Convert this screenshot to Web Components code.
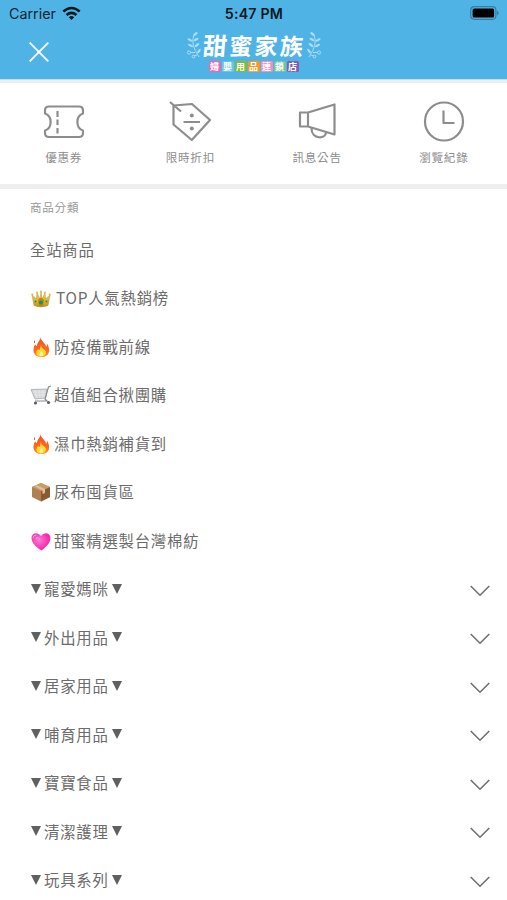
<!DOCTYPE html>
<html lang="zh-Hant">
<head>
<meta charset="utf-8">
<title>商品分類</title>
<style>
html,body{margin:0;background:#fff}
body{height:900px;overflow:hidden;font-family:"Noto Sans CJK TC","Noto Sans",sans-serif;color:#6c6c6c}
</style>
</head>
<body>
<store-menu></store-menu>
<script>
const define = (name, markup, render) => {
  const t = document.createElement('template');
  t.innerHTML = markup;
  customElements.define(name, class extends HTMLElement {
    constructor() {
      super();
      this.attachShadow({mode: 'open'}).append(t.content.cloneNode(true));
    }
    connectedCallback() { if (render) render(this, this.shadowRoot); }
  });
};

const shortcutIcons = {
  ticket: '<path d="M6 5.500H37Q41 5.500 41 9.500V12.500C33.500 15 33.500 27 41 29.500V32Q41 36 37 36H7Q3 36 3 32V29.500C10.500 27 10.500 15 3 12.500V9.500Q3 5.500 7 5.500Z"/><path d="M15.500 10V16M15.500 18.500V24M15.500 27V32.500"/>',
  tag: '<path d="M4.500 4.500 23 3 41 19 22.800 39 4.500 23.500ZM1 1 12 10.500M14.500 21H31"/><circle cx="22.800" cy="14.500" r="2" fill="#8d8d8d" stroke="none"/><circle cx="22.800" cy="27.500" r="2" fill="#8d8d8d" stroke="none"/>',
  horn: '<path d="M4 11.500H12V25.500H4ZM12 11.500 38.500 3.500V33.500L12 25.500M15.500 27.500C15.500 38.500 30 38.500 30 31.500"/>',
  clock: '<circle cx="21" cy="20.500" r="19"/><path d="M20.500 9.500V22H31.500"/>'
};
const emojis = {
  crown: '<defs><linearGradient id="g" x2="0" y2="1"><stop stop-color="#f9de60"/><stop offset="1" stop-color="#c79318"/></linearGradient></defs><path d="M3 17.500 1 7 5.500 11 6 5 9 11 10 4 11 11 14 5 14.500 11 19 7 17 17.500Q10 20.500 3 17.500Z" fill="url(#g)" stroke="#b68b22" stroke-width=".5"/><g fill="#dfb93b"><circle cx="1.300" cy="6.500" r="1"/><circle cx="6" cy="4.500" r=".9"/><circle cx="10" cy="3.500" r="1"/><circle cx="14" cy="4.500" r=".9"/><circle cx="18.700" cy="6.500" r="1"/></g><path d="M7 12Q10 8 13 12L12 18H8Z" fill="#b98a13"/><g fill="#159467"><circle cx="10" cy="14.500" r="2"/><circle cx="4.500" cy="13.500" r="1"/><circle cx="15.500" cy="13.500" r="1"/></g>',
  fire: '<defs><linearGradient id="g" x2="0" y2="1"><stop stop-color="#f0502b"/><stop offset=".65" stop-color="#ff681c"/><stop offset="1" stop-color="#ff991d"/></linearGradient></defs><path d="M9.500 0C9.500 4 15 6 15 10Q16 9 16 6.500C20 13 18.500 20 10.500 20C2 20 1 13 4 7.500Q5 9 6 9C6 5 9.500 4 9.500 0Z" fill="url(#g)"/><path d="M10 8C10 12 15.500 12 15 16Q13.500 19.500 10 19.500C4 19.500 5 14 7 12Q8 13 8.500 13Z" fill="#ffda35"/><path d="M10.500 14Q14 19 10 19.300Q7 18 10.500 14Z" fill="#fff0a1"/><path d="M3.500 3.500V6" stroke="#f35b30"/>',
  cart: '<path d="M0 4.500 16 4 14.500 13 4 14Z" fill="#d6d7d9" stroke="#aaa" stroke-width=".8"/><path d="M2 7H15M3 10H15M4 5 6 13M8 5 9 13M12 5V13" stroke="#f0f0f0" stroke-width=".5"/><path d="M20 1 17.500 2 14 14 16 16H4" fill="none" stroke="#888b90" stroke-width="1.200"/><circle cx="4.500" cy="18" r="1.600" fill="#5b5f65"/><circle cx="17.500" cy="17.500" r="1.600" fill="#5b5f65"/>',
  box: '<path d="M1 5 10 1 19 5V15L10 19.500 1 15Z" fill="#b18050"/><path d="M10 9 19 5V15L10 19.500Z" fill="#885b36"/><path d="M1 5 10 1 19 5 10 9Z" fill="#c99b6c"/><path d="M5 3 14 7V11L11.500 12V8.500L3.500 4Z" fill="#dfc29b"/>',
  heart: '<defs><radialGradient id="g" cx=".4" cy=".4"><stop stop-color="#fa7bd4"/><stop offset="1" stop-color="#f72dac"/></radialGradient></defs><path d="M10.500 19.500C5 16 .5 12 .5 7C.5 1.500 7 .5 10 5C13 .5 19.500 1.500 19.500 7C19.500 12 15 16 10.500 19.500Z" fill="url(#g)"/><path d="M2 7Q2 4 5.500 4M5 8Q6 5 9 8.500" fill="none" stroke="#ffb8e9" stroke-width=".8"/>'
};

define('status-bar', `<style>
:host{display:grid;grid-template-columns:1fr auto 1fr;align-items:center;height:27px;padding:0 8px 0 9px;box-sizing:border-box;color:#102530;font:14.300px/27px Inter,sans-serif}
.l{display:flex;gap:6px;align-items:center}.time{font-weight:600;font-size:14.200px;color:#071720;letter-spacing:.2px}.r{justify-self:end;display:flex}
svg{display:block}</style>
<div class="l"><span>Carrier</span><svg width="19" height="15" viewBox="0 0 19 15" fill="none" stroke="#071720" stroke-width="2.600"><path d="M1.300 5.500Q9.500-1.500 17.700 5.500M4.500 9Q9.500 4.800 14.500 9"/><path d="M6.800 11.200Q9.500 9 12.200 11.200L9.500 14Z" fill="#071720" stroke="none"/></svg></div>
<span class="time">5:47 PM</span>
<div class="r"><svg width="29" height="15" viewBox="0 0 29 15"><rect x=".7" y=".7" width="25.200" height="12.600" rx="3.500" fill="none" stroke="#367f9f" stroke-width="1.200"/><rect x="2.600" y="2.600" width="21.500" height="8.800" rx="1.500"/><path d="M27 4.500Q30.500 7 27 9.500Z" fill="#367f9f"/></svg></div>`);

define('leaf-sprig', `<style>:host{display:block;width:16px;height:30px}:host([flip]){transform:scaleX(-1)}svg{display:block}</style>
<svg width="16" height="30" viewBox="0 0 16 30" fill="none" stroke="#a9dcf5" stroke-width="1"><path d="M8 4Q4 13 13 26"/><g fill="#a9dcf5" stroke="none"><ellipse cx="9.500" cy="3" rx="2.600" ry="1.200" transform="rotate(-35 9.500 3)"/><ellipse cx="4" cy="9" rx="2.800" ry="1.200" transform="rotate(25 4 9)"/><ellipse cx="10" cy="8.500" rx="2.800" ry="1.200" transform="rotate(-30 10 8.500)"/><ellipse cx="4.500" cy="14.500" rx="2.800" ry="1.200" transform="rotate(25 4.500 14.500)"/><ellipse cx="11" cy="14" rx="2.800" ry="1.200" transform="rotate(-40 11 14)"/><ellipse cx="13" cy="20" rx="2.600" ry="1.200" transform="rotate(-55 13 20)"/></g><circle cx="3" cy="21.500" r="1.600"/><circle cx="7.500" cy="25.500" r="1.400"/><path d="M4.500 21.500H9M8 25 11 24"/></svg>`);

define('brand-logo', `<style>
:host{display:grid;grid-template-columns:16px 100px 16px;column-gap:2px;justify-content:center;color:#fff}
.name{height:30px;line-height:28px;font-weight:700;white-space:nowrap;display:flex;justify-content:space-between;transform:translateX(-1px) skewX(-5deg)}
.name span{font-size:23px}.name span:first-child{font-size:24px}
.tiles{grid-column:1/4;display:flex;gap:1px;justify-content:center}
.tiles span{width:12px;height:11px;border-radius:1.500px;font-size:9px;line-height:11px;text-align:center;font-weight:700}
</style><leaf-sprig></leaf-sprig><div class="name"><span>甜</span><span>蜜</span><span>家</span><span>族</span></div><leaf-sprig flip></leaf-sprig><div class="tiles"></div>`,
(el, r) => {
  const colors = ['#eb69aa', '#62c6ed', '#80bd32', '#f29a25', '#ee91bf', '#73c69b', '#8060b0'];
  r.querySelector('.tiles').innerHTML = [...'婦嬰用品連鎖店'].map((c, i) => `<span style="background:${colors[i]}">${c}</span>`).join('');
});

define('app-header', `<style>
:host{display:block;height:79px;background:#50b3e6;border-bottom:1px solid #b9e0f4;box-sizing:content-box}
.bar{display:grid;grid-template-columns:1fr 136px 1fr;padding-top:4px}
.close{margin:11px 0 0 29px}</style>
<status-bar></status-bar><div class="bar"><svg class="close" width="20" height="20" viewBox="0 0 20 20" stroke="#fff" stroke-width="1.800"><path d="M.7.7 19.300 19.300M19.300.7.7 19.300"/></svg><brand-logo></brand-logo></div>`);

define('quick-link', `<style>:host{display:flex;flex-direction:column;align-items:center;color:#8d8d8d;font-size:11.600px;letter-spacing:.7px;line-height:18px}
svg{display:block;overflow:visible;margin-bottom:6px}span{padding-left:.500px}</style>
<svg width="42" height="41" viewBox="0 0 42 41" fill="none" stroke="#8d8d8d" stroke-width="2.200" stroke-linejoin="round"></svg><span><slot></slot></span>`,
(el, r) => { r.querySelector('svg').innerHTML = shortcutIcons[el.getAttribute('icon')]; });

define('category-row', `<style>
:host{display:flex;align-items:center;height:48.500px;padding:0 17px 0 30px;box-sizing:border-box;font-size:15.400px;letter-spacing:.75px;line-height:24px;white-space:nowrap}
.text{padding-bottom:1px}:host([spaced]) .text{padding-left:2px}
.emoji{width:20px;height:20px;margin:1px 3px 0 1px;overflow:visible}
.tri{width:10px;height:10px;flex:none}.before{margin:0 3px 0 1px}.after{margin:0 0 0 3.500px}
.chev{margin:4px 0 0 auto}[hidden]{display:none}
</style><svg class="emoji" viewBox="0 0 20 20" hidden></svg><svg class="tri before" viewBox="0 0 10 10" hidden><path d="M0 0H10L5 10Z" fill="#606060"/></svg><span class="text"><slot></slot></span><svg class="tri after" viewBox="0 0 10 10" hidden><path d="M0 0H10L5 10Z" fill="#606060"/></svg><svg class="chev" width="20" height="12" viewBox="0 0 20 12" fill="none" stroke="#707070" stroke-width="1.600" hidden><path d="M.7 1 10 10.200 19.300 1"/></svg>`,
(el, r) => {
  const e = el.getAttribute('emoji');
  if (e) {
    const svg = r.querySelector('.emoji');
    svg.removeAttribute('hidden');
    svg.innerHTML = emojis[e];
  }
  if (el.hasAttribute('group')) r.querySelectorAll('.tri,.chev').forEach(s => s.removeAttribute('hidden'));
});

define('store-menu', `<style>
:host{display:block;height:900px;overflow:hidden;background:#fff}
nav{display:grid;grid-template-columns:repeat(4,1fr);height:101px;padding-top:18px;box-sizing:border-box}
.rule{height:3px;background:#eee}.rule.b{height:5px}
h2{font-size:11.600px;font-weight:400;letter-spacing:.7px;line-height:18px;color:#999;margin:9px 0 9px 30px}
</style>
<app-header></app-header><div class="rule"></div>
<nav><quick-link icon="ticket">優惠券</quick-link><quick-link icon="tag">限時折扣</quick-link><quick-link icon="horn">訊息公告</quick-link><quick-link icon="clock">瀏覽紀錄</quick-link></nav>
<div class="rule b"></div>
<h2>商品分類</h2>
<category-row>全站商品</category-row>
<category-row emoji="crown" spaced>TOP人氣熱銷榜</category-row>
<category-row emoji="fire">防疫備戰前線</category-row>
<category-row emoji="cart">超值組合揪團購</category-row>
<category-row emoji="fire">濕巾熱銷補貨到</category-row>
<category-row emoji="box">尿布囤貨區</category-row>
<category-row emoji="heart">甜蜜精選製台灣棉紡</category-row>
<category-row group>寵愛媽咪</category-row>
<category-row group>外出用品</category-row>
<category-row group>居家用品</category-row>
<category-row group>哺育用品</category-row>
<category-row group>寶寶食品</category-row>
<category-row group>清潔護理</category-row>
<category-row group>玩具系列</category-row>`);
</script>
</body>
</html>
